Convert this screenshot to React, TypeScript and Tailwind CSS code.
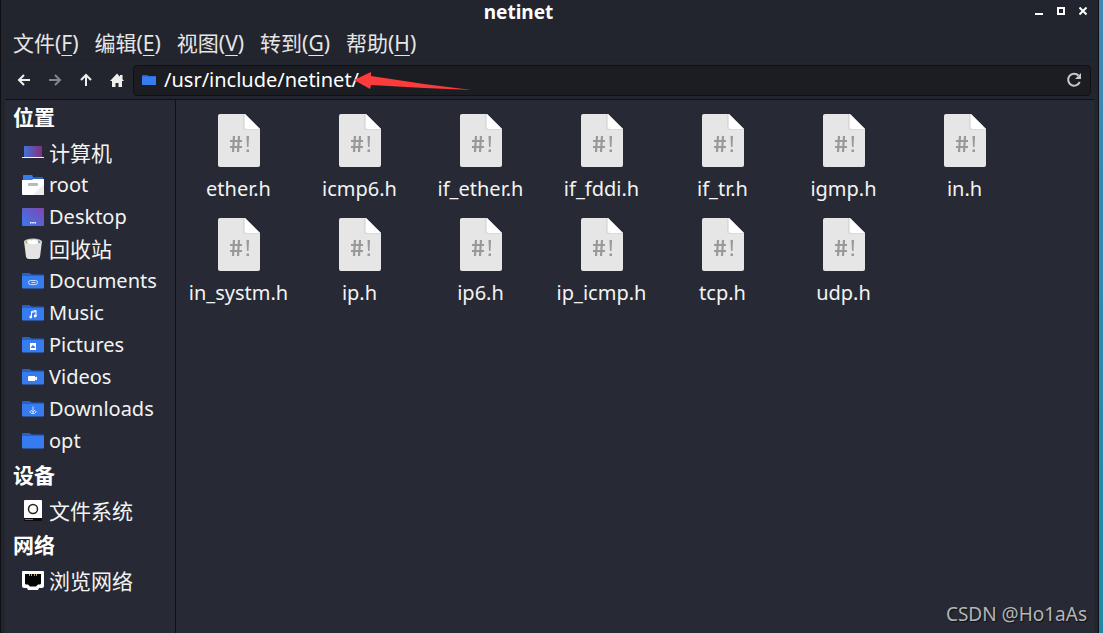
import type { ReactNode } from "react";

const menus = [
  { label: "文件", accel: "F" },
  { label: "编辑", accel: "E" },
  { label: "视图", accel: "V" },
  { label: "转到", accel: "G" },
  { label: "帮助", accel: "H" },
];

const files = [
  "ether.h",
  "icmp6.h",
  "if_ether.h",
  "if_fddi.h",
  "if_tr.h",
  "igmp.h",
  "in.h",
  "in_systm.h",
  "ip.h",
  "ip6.h",
  "ip_icmp.h",
  "tcp.h",
  "udp.h",
];

function Icon({ children }: { children: ReactNode }) {
  return (
    <svg width="22" height="22" viewBox="0 0 22 22" className="shrink-0" aria-hidden="true">
      {children}
    </svg>
  );
}

function Folder({ children }: { children?: ReactNode }) {
  return (
    <Icon>
      <path d="M0 4a1 1 0 0 1 1-1h6l3 1.500h11a1 1 0 0 1 1 1V10H0z" fill="#2861c4" />
      <path d="M0 6h22v11.500a1 1 0 0 1-1 1H1a1 1 0 0 1-1-1z" fill="#367bf0" />
      {children}
    </Icon>
  );
}

function ComputerIcon() {
  return (
    <Icon>
      <defs>
        <linearGradient id="screen" x1="0" y1="0" x2="1" y2="0">
          <stop offset="0" stopColor="#4272d8" />
          <stop offset="1" stopColor="#842f78" />
        </linearGradient>
      </defs>
      <rect x="2" y="4" width="18" height="11" fill="url(#screen)" />
      <rect y="15" width="22" height="1" fill="#f5f5f5" />
    </Icon>
  );
}

function HomeFolderIcon() {
  return (
    <Icon>
      <path d="M1 2a1 1 0 0 1 1-1h8l1 2h10v5H1z" fill="#2861c4" />
      <path d="M1 2a1 1 0 0 1 1-1h8l1 2-1 3H1z" fill="#367bf0" />
      <path d="M0 6h10l1-1h11v15a1 1 0 0 1-1 1H1a1 1 0 0 1-1-1z" fill="#fff" />
      <path d="M22 10v10a1 1 0 0 1-1 1H11z" fill="#ececec" />
      <rect x="6" y="9" width="10" height="3" rx="1" fill="#b9b9b9" />
    </Icon>
  );
}

function DesktopIcon() {
  return (
    <Icon>
      <defs>
        <linearGradient id="desk" x1="0" y1="1" x2="1" y2="0">
          <stop offset="0" stopColor="#367bf0" />
          <stop offset="1" stopColor="#8344ae" />
        </linearGradient>
      </defs>
      <rect y="2" width="22" height="18" rx="1" fill="url(#desk)" />
      <path d="M8 16h1.500v1.500H8zM10.250 16h1.500v1.500h-1.500zM12.500 16h1.500v1.500h-1.500z" fill="#fff" />
    </Icon>
  );
}

function TrashIcon() {
  return (
    <Icon>
      <path d="M2 3h18l-2 16q-.5 2-3 2H7q-2.500 0-3-2z" fill="#e4e4e4" />
      <ellipse cx="11" cy="3.500" rx="9" ry="3" fill="#c9c9c9" />
      <path d="M4 4q2-3 5-1.500 4-2 6 0l3 2q-3 2-7 2T4 4z" fill="#fff" />
      <circle cx="4.500" cy="4" r="1" fill="#c9a64b" />
      <circle cx="17" cy="4" r="1" fill="#3f9b8e" />
    </Icon>
  );
}

function DiskIcon() {
  return (
    <Icon>
      <rect x="2" y="18" width="18" height="3" rx="1" fill="#0c0c0e" />
      <path d="M3 19h8v1H3z" fill="#777" />
      <path d="M3 0h16a1 1 0 0 1 1 1v17H2V1a1 1 0 0 1 1-1z" fill="#fff" />
      <circle cx="11" cy="9" r="4.500" fill="#fff" stroke="#222" strokeWidth="1.500" />
    </Icon>
  );
}

function NetworkIcon() {
  return (
    <Icon>
      <path
        d="M1 1h20a1 1 0 0 1 1 1v14q0 2-2 2h-3l-1 2H6l-1-2H2q-2 0-2-2V2a1 1 0 0 1 1-1z"
        fill="#fff"
      />
      <path d="M3 4h16v9q0 1-1 1.500h-2l-2 2H8l-2-2H4q-1-.5-1-1.500z" fill="#050505" />
      <path d="M7 4h1v2H7zM9 4h1v2H9zM12 4h1v2h-1zM14 4h1v2h-1z" fill="#b8a05a" />
    </Icon>
  );
}

const places = [
  { name: "计算机", icon: <ComputerIcon /> },
  { name: "root", icon: <HomeFolderIcon /> },
  { name: "Desktop", icon: <DesktopIcon /> },
  { name: "回收站", icon: <TrashIcon /> },
  {
    name: "Documents",
    icon: (
      <Folder>
        <path
          d="M9.500 12.500h4M8.500 10.500h5a2 2 0 0 1 0 4h-5a2 2 0 0 1 0-4"
          fill="none"
          stroke="#c9dcff"
          strokeWidth="1"
        />
      </Folder>
    ),
  },
  {
    name: "Music",
    icon: (
      <Folder>
        <path d="M9.500 15V9.500l4.500-1V14M9.500 10.500l4.500-1" fill="none" stroke="#fff" />
        <circle cx="8.800" cy="15" r="1.400" fill="#fff" />
        <circle cx="13.200" cy="14" r="1.400" fill="#fff" />
      </Folder>
    ),
  },
  {
    name: "Pictures",
    icon: (
      <Folder>
        <rect x="8" y="9" width="6" height="7" fill="#fff" />
        <path d="M9 14v-1l1-1 1-1 1 1 1 1v1z" fill="#367bf0" />
      </Folder>
    ),
  },
  {
    name: "Videos",
    icon: (
      <Folder>
        <path d="M7 10h6v1.500l2-1v4l-2-1V15H7a1 1 0 0 1-1-1v-3a1 1 0 0 1 1-1z" fill="#fff" />
      </Folder>
    ),
  },
  {
    name: "Downloads",
    icon: (
      <Folder>
        <path d="M11 8.500v6M9 12l2 2.500 2-2.500M8 13v1l1.500 1.500h3L14 14v-1" fill="none" stroke="#cfe0ff" />
      </Folder>
    ),
  },
  { name: "opt", icon: <Folder /> },
];

const sections = [
  { title: "位置", items: places },
  { title: "设备", items: [{ name: "文件系统", icon: <DiskIcon /> }] },
  { title: "网络", items: [{ name: "浏览网络", icon: <NetworkIcon /> }] },
];

function FileIcon() {
  return (
    <svg width="44" height="56" viewBox="0 0 44 56" aria-hidden="true">
      <path d="M3 1h25l15 15v36a2 2 0 0 1-2 2H3a2 2 0 0 1-2-2V3a2 2 0 0 1 2-2z" fill="#e6e6e6" />
      <path d="M27 1v13a2 2 0 0 0 2 2h14v1H28q-2 0-2-2V1z" fill="#d9d9d9" />
      <path d="M28 1l15 15H30a2 2 0 0 1-2-2z" fill="#fff" />
      <path
        d="M17 23l-1 16M22 23l-1 16M13 28h12M13 34h12"
        fill="none"
        stroke="#999"
        strokeWidth="2.200"
      />
      <path d="M29.500 23h2.500l-.5 11h-1.500zM29.500 36.500h2.500V39h-2.500z" fill="#999" />
    </svg>
  );
}

function NavButton({ label, dim, children }: { label: string; dim?: boolean; children: ReactNode }) {
  return (
    <button
      aria-label={label}
      disabled={dim}
      className={`flex h-8 w-[31px] items-center justify-center ${dim ? "text-[#85868a]" : "text-[#efefec]"}`}
    >
      <svg width="16" height="16" viewBox="0 0 16 16" fill="none" stroke="currentColor" strokeWidth="2" aria-hidden="true">
        {children}
      </svg>
    </button>
  );
}

export default function App() {
  return (
    <div className="flex min-h-screen bg-gradient-to-b from-[#3d87b5] to-[#1f87a5] pr-1 font-['Noto_Sans','Noto_Sans_CJK_SC',sans-serif] text-xl text-[#f3f3f3]">
      <div className="flex min-w-0 flex-1 flex-col border-x border-[#0e0f13] bg-[#23252e]">
        <header className="flex h-6 items-center pr-1 pl-2">
          <h1 className="flex-1 text-center text-[19px] leading-6 font-bold text-white">netinet</h1>
          <button aria-label="最小化" className="flex h-6 w-[22px] items-center justify-center">
            <svg width="8" height="8" viewBox="0 0 8 8" fill="#fff">
              <path d="M0 5h8v2H0z" />
            </svg>
          </button>
          <button aria-label="最大化" className="flex h-6 w-[22px] items-center justify-center pb-0.5">
            <svg width="8" height="8" viewBox="0 0 8 8" fill="none" stroke="#fff" strokeWidth="2">
              <path d="M1 1h6v6H1z" />
            </svg>
          </button>
          <button aria-label="关闭" className="flex h-6 w-[22px] items-center justify-center pb-0.5">
            <svg width="8" height="8" viewBox="0 0 8 8" stroke="#fff" strokeWidth="2">
              <path d="M.5.5l7 7M7.500.5l-7 7" />
            </svg>
          </button>
        </header>

        <nav className="flex h-[37px] items-center gap-4 border-b border-[#20222a] px-3 pt-0.5">
          {menus.map((menu) => (
            <button key={menu.accel} className="text-[21px] leading-7 whitespace-nowrap text-[#e6e6e6]">
              {menu.label}(<span className="underline decoration-1 underline-offset-4">{menu.accel}</span>)
            </button>
          ))}
        </nav>

        <div className="flex h-[38px] items-center pr-[7px] pl-[7px]">
          <NavButton label="后退">
            <path d="M14 8H3M8 3L3 8l5 5" />
          </NavButton>
          <NavButton label="前进" dim>
            <path d="M2 8h11M8 3l5 5-5 5" />
          </NavButton>
          <NavButton label="上一级">
            <path d="M8 14V3M3 8l5-5 5 5" />
          </NavButton>
          <NavButton label="主目录">
            <path d="M8 1.500L1 9h2v6h3.500v-4h3v4H13V9h2l-1.500-1.700V3H11v1.700z" fill="currentColor" stroke="none" />
          </NavButton>
          <div className="relative ml-px flex h-[31px] min-w-0 flex-1 items-center rounded border border-[#101115] bg-[#1b1d22] px-2">
            <svg width="14" height="10" viewBox="0 0 14 10" className="shrink-0" aria-hidden="true">
              <path d="M0 0h5l2 1h7v3H0z" fill="#2861c4" />
              <path d="M0 1.500h14V10H0z" fill="#367bf0" />
            </svg>
            <input
              aria-label="路径"
              defaultValue="/usr/include/netinet/"
              className="ml-2 h-7 min-w-0 flex-1 bg-transparent text-white outline-none"
            />
            <button aria-label="刷新" className="text-[#c6c7c8]">
              <svg width="16" height="16" viewBox="0 0 16 16" aria-hidden="true">
                <path d="M12.500 3.500A6 6 0 1 0 13.700 10" fill="none" stroke="currentColor" strokeWidth="2" />
                <path d="M15 1v6H9z" fill="currentColor" />
              </svg>
            </button>
            {/* arrow pointing at the end of the path */}
            <svg width="118" height="20" viewBox="0 0 118 20" className="pointer-events-none absolute top-1.5 left-[220px]" aria-hidden="true">
              <path d="M0 8L17 0v4L70 12l48 6-48-2-53-3-1 4z" fill="#fb3b3c" />
            </svg>
          </div>
        </div>

        <div className="mx-1 flex flex-1 border-t border-[#101116] bg-[#272a34]">
          <aside className="flex w-[171px] shrink-0 flex-col gap-px border-r border-[#101116]">
            {sections.map((section) => (
              <section key={section.title}>
                <h2 className="flex h-[37px] items-center pb-1 pl-2 text-[21px] leading-8 font-bold text-white">
                  {section.title}
                </h2>
                <ul>
                  {section.items.map((item) => (
                    <li key={item.name}>
                      <a href="#" className="flex h-8 items-center gap-[5px] pl-[17px] leading-8">
                        {item.icon}
                        <span className={/^[a-z]/i.test(item.name) ? "text-xl" : "text-[21px]"}>{item.name}</span>
                      </a>
                    </li>
                  ))}
                </ul>
              </section>
            ))}
          </aside>

          <main className="min-w-0 flex-1 pt-[13px] pl-[2px]">
            <ul className="grid grid-cols-[repeat(auto-fill,121px)]">
              {files.map((file) => (
                <li key={file} className="h-[104px]">
                  <button className="flex w-full flex-col items-center gap-1.5">
                    <FileIcon />
                    <span className="leading-7">{file}</span>
                  </button>
                </li>
              ))}
            </ul>
          </main>
        </div>
      </div>
      <p className="pointer-events-none absolute right-4 bottom-[5px] text-[19px] leading-7 text-[#b4b5b8] [text-shadow:1px_1px_1px_#111]">
        CSDN @Ho1aAs
      </p>
    </div>
  );
}
